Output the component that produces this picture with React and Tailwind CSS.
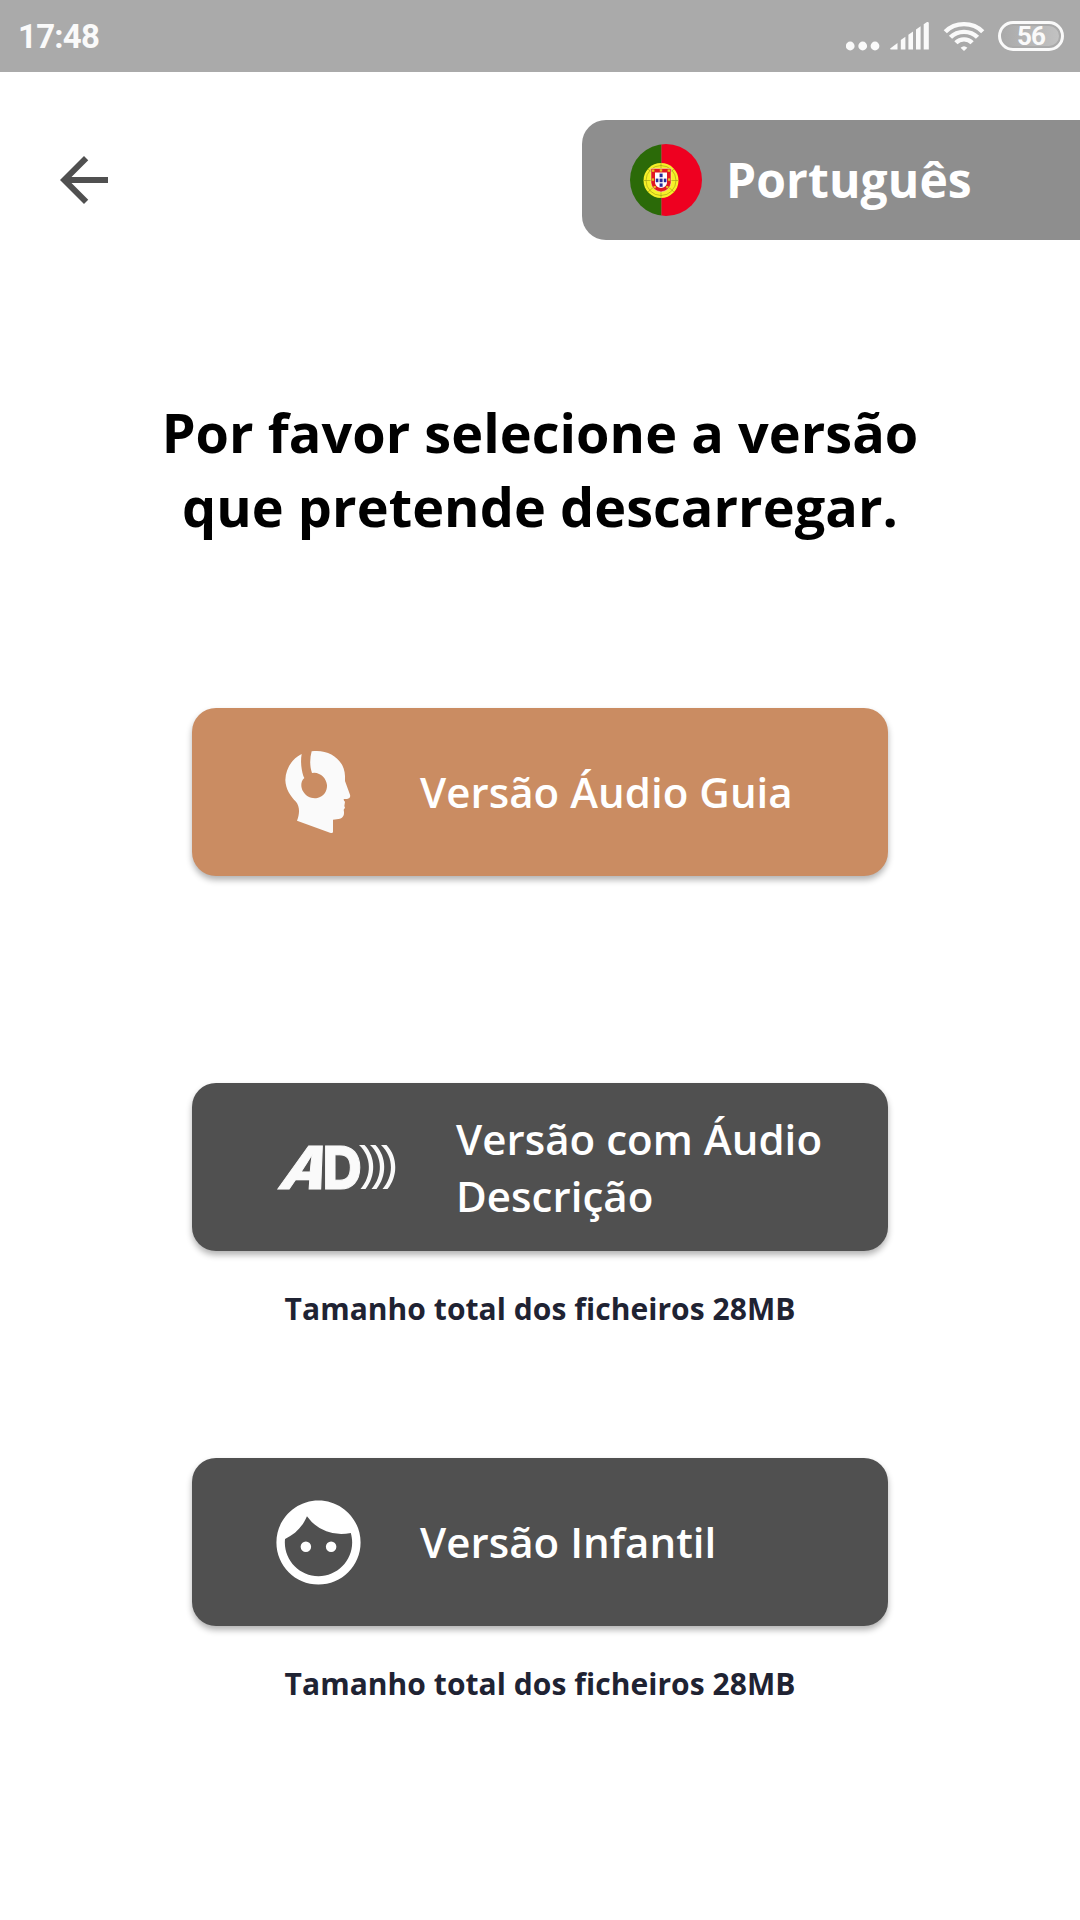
import React from 'react'
import { MdArrowBack, MdFace } from 'react-icons/md'

const StatusBar = () => {
  return (
    <div className="h-[72px] bg-[#aaaaaa] flex items-center justify-between pl-[18px] pr-[16px] text-[#fafafa]">
      <span className="font-[Roboto] font-bold text-[33px] leading-none tracking-[-0.8px]">17:48</span>
      <div className="flex items-center">
        <svg width="34" height="32" viewBox="0 0 34 32" fill="currentColor">
          <circle cx="4.2" cy="26" r="4.4" />
          <circle cx="16.7" cy="26" r="4.4" />
          <circle cx="29" cy="26" r="4.4" />
        </svg>
        <svg className="ml-[10px]" width="40" height="32" viewBox="0 0 40 32" fill="currentColor">
          <path d="M0.2 28.5 L7.5 23 V29.5 H1 Q-0.2 29 0.2 28.5 Z" />
          <path d="M10.8 20 L15.4 16.8 V29.5 H10.8 Z" />
          <path d="M18.4 14.8 L23 11.6 V29.5 H18.4 Z" />
          <path d="M26 9.5 L30.6 6.3 V29.5 H26 Z" />
          <path d="M33.7 4.3 L37 2 Q38.8 1.5 38.8 3.2 V29.5 H33.7 Z" />
        </svg>
        <svg className="ml-[13px]" width="42" height="32" viewBox="0 0 42 32" fill="none" stroke="currentColor" strokeWidth="4.4">
          <path d="M2.3 11.8 C12 1.6 30 1.6 39.7 11.8" />
          <path d="M7.5 17.3 C14.5 10 27.5 10 34.5 17.3" />
          <path d="M12.9 22.8 C17.2 18.2 24.8 18.2 29.1 22.8" />
          <path d="M21 31 L17.6 27.8 Q21 24.6 24.4 27.8 Z" fill="currentColor" stroke="none" />
        </svg>
        <div className="ml-[13px] w-[66px] h-[30px] border-[3px] border-[#fafafa] rounded-full p-[2px] flex">
          <div className="w-full rounded-full flex items-center justify-center bg-linear-to-r from-[#aaaaaa] to-[#c2c2c2]">
            <span className="font-[Roboto] font-bold text-[26px] leading-none tracking-[-1px]">56</span>
          </div>
        </div>
      </div>
    </div>
  )
}

const PortugalFlag = () => {
  return (
    <svg width="72" height="72" viewBox="0 0 72 72">
      <clipPath id="flag-round">
        <circle cx="36" cy="36" r="36" />
      </clipPath>
      <g clipPath="url(#flag-round)">
        <rect width="31.5" height="72" fill="#2b6a08" />
        <rect x="31.5" width="41" height="72" fill="#ee0020" />
      </g>
      <circle cx="31" cy="36.5" r="17.5" fill="#f6f028" />
      <g fill="none" stroke="#8a8a10" strokeWidth="0.5">
        <circle cx="31" cy="36.5" r="15" />
        <path d="M14 36.5 H48 M31 19 V54 M18 25 L44 48 M44 25 L18 48" />
      </g>
      <path d="M21 24.5 H41 V39 Q40 46.5 31 48 Q22 46.5 21 39 Z" fill="#e01822" stroke="#f6f0d0" strokeWidth="0.5" />
      <path d="M25 28.5 H37 V39 Q36 43.5 31 44 Q26 43.5 25 39 Z" fill="#ffffff" />
      <g fill="#2a2a98">
        <rect x="29.6" y="29.6" width="3" height="3.6" />
        <rect x="29.6" y="34.6" width="3" height="3.6" />
        <rect x="29.6" y="39.4" width="3" height="3.4" />
        <rect x="25.8" y="34.6" width="2.6" height="3.6" />
        <rect x="33.8" y="34.6" width="2.6" height="3.6" />
      </g>
      <g fill="#e8c020">
        <rect x="22" y="25.4" width="2.4" height="2.4" />
        <rect x="29.8" y="25.2" width="2.4" height="2.4" />
        <rect x="37.6" y="25.4" width="2.4" height="2.4" />
        <rect x="21.8" y="34.4" width="2.2" height="2.4" />
        <rect x="38" y="34.4" width="2.2" height="2.4" />
        <rect x="23.6" y="42" width="2.2" height="2.2" />
        <rect x="36.2" y="42" width="2.2" height="2.2" />
      </g>
    </svg>
  )
}

const HeadphonesIcon = () => {
  return (
    <svg className="ml-[93px] w-[66px] h-[84px]" viewBox="315 150 198 252" fill="#fafafa">
      <path d="M395 154 C448 146 494 180 495 228 V243 L510 284 Q513 295 501 297 H491 L492 302 L495 305 L493 318 L495 323 L491 329 C495 348 488 357 470 358 L459 359 V397 Q457 400 450 398 L351 362 C360 340 359 318 348 305 C330 288 317 266 316 240 C317 207 335 176 365 162 C361 184 364 208 370 228 L373 234 C360 246 363 263 369 274 C378 290 395 297 412 294 C432 290 442 273 441 255 C439 235 423 219 403 218 L396 219 C389 200 389 176 395 154 Z" />
    </svg>
  )
}

const AudioDescriptionIcon = () => {
  return (
    <svg className="ml-[66px] w-[138px] h-[106px]" viewBox="-20 -30 138 106" fill="#fafafa">
      <g fontFamily="Inter, sans-serif" fontWeight="800" fontSize="59" stroke="#fafafa" strokeWidth="1">
        <text transform="translate(-1.5 44.5) skewX(-21)" textLength="45.5" lengthAdjust="spacingAndGlyphs">A</text>
        <text x="44.5" y="44.5" textLength="39.5" lengthAdjust="spacingAndGlyphs">D</text>
      </g>
      <g>
        <path d="M81 1 H86.5 C98 13 98 32 87.5 45 H82.5 C94 32 94 13 81 1 Z" />
        <path d="M92 1 H97.5 C109 13 109 32 98.5 45 H93.5 C105 32 105 13 92 1 Z" />
        <path d="M103 1 H108.5 C120 13 120 32 109.5 45 H104.5 C116 32 116 13 103 1 Z" />
      </g>
    </svg>
  )
}

const VersionButton = ({ icon, label, color, textClass }) => {
  return (
    <button className={`w-[696px] h-[168px] rounded-[24px] flex items-center text-left shadow-[0_4px_6px_rgba(0,0,0,0.3)] ${color}`}>
      {icon}
      <span className={`text-[42px] leading-[57px] tracking-[0.05px] font-semibold text-white ${textClass}`}>{label}</span>
    </button>
  )
}

const FileSize = () => {
  return <p className="mt-[37px] text-[30px] leading-[41px] tracking-[0.05px] font-bold text-[#1f2333]">Tamanho total dos ficheiros 28MB</p>
}

const App = () => {
  return (
    <div className="w-[1080px] h-[1920px] bg-white font-['Open_Sans',sans-serif] overflow-hidden">
      <StatusBar />

      <div className="mt-[48px] h-[120px] flex items-center justify-between">
        <button className="ml-[48px]" aria-label="Voltar">
          <MdArrowBack className="w-[72px] h-[72px] text-[#505050]" />
        </button>
        <div className="w-[498px] h-[120px] pl-[48px] bg-[#8e8e8e] rounded-l-[24px] flex items-center gap-[24px]">
          <PortugalFlag />
          <span className="text-[48px] leading-none tracking-[0.1px] font-bold text-white">Português</span>
        </div>
      </div>

      <h1 className="mt-[155px] text-center text-[54px] leading-[74px] tracking-[0.06px] font-bold text-black">
        Por favor selecione a versão
        <br />
        que pretende descarregar.
      </h1>

      <div className="mt-[165px] flex flex-col items-center">
        <VersionButton icon={<HeadphonesIcon />} label="Versão Áudio Guia" color="bg-[#ca8c62]" textClass="ml-[69px] pb-[2px]" />
        <div className="mt-[207px] flex flex-col items-center">
          <VersionButton
            icon={<AudioDescriptionIcon />}
            label={<>Versão com Áudio<br />Descrição</>}
            color="bg-[#505050]"
            textClass="ml-[60px]"
          />
          <FileSize />
        </div>
        <div className="mt-[129px] flex flex-col items-center">
          <VersionButton
            icon={<MdFace className="ml-[75.5px] w-[101px] h-[101px] text-white" />}
            label="Versão Infantil"
            color="bg-[#505050]"
            textClass="ml-[51.5px] pb-[2px]"
          />
          <FileSize />
        </div>
      </div>
    </div>
  )
}

export default App
